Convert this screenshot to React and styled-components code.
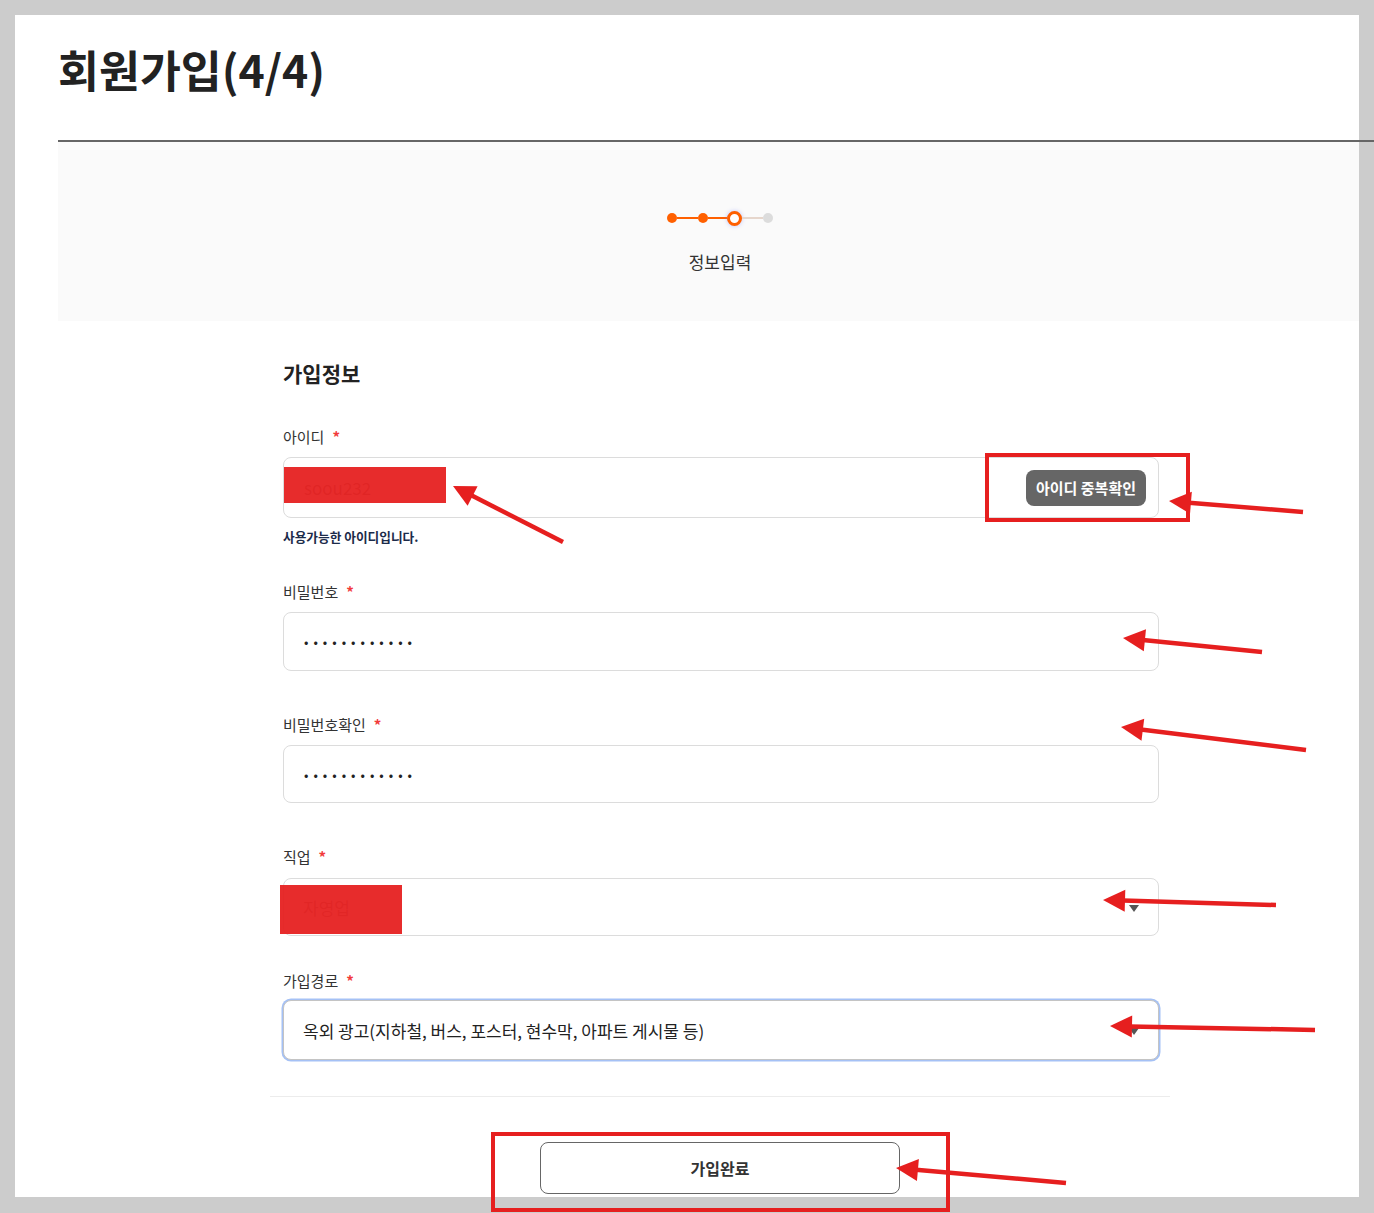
import React from 'react';
import styled, { createGlobalStyle, css } from 'styled-components';

const GlobalStyle = createGlobalStyle`
  html, body {
    margin: 0;
    padding: 0;
    background: #cccccc;
    font-family: "Noto Sans CJK KR", "Noto Sans", sans-serif;
    color: #222;
  }
  * { box-sizing: border-box; }
`;

const Page = styled.div`
  position: relative;
  width: 1374px;
  height: 1213px;
  padding: 15px 15px 16px;
  overflow: hidden;
`;

const Panel = styled.div`
  background: #fff;
  height: 1182px;
  padding-left: 43px;
`;

const Title = styled.h1`
  margin: 0;
  padding-top: 27px;
  padding-bottom: 44px;
  font-size: 44.5px;
  line-height: 54px;
  font-weight: 700;
  color: #222;
`;

const HeaderLine = styled.div`
  height: 2px;
  background: #666;
  margin-right: -15px;
`;

const StepArea = styled.section`
  background: #fafafa;
  height: 179px;
  padding: 69px 0 0 212px;
`;

const StepInner = styled.div`
  width: 900px;
  display: flex;
  flex-direction: column;
  align-items: center;
  gap: 25px;
`;

const Steps = styled.div`
  display: flex;
  align-items: center;
  height: 14px;
`;

const Dot = styled.span`
  width: 10px;
  height: 10px;
  border-radius: 50%;
  background: ${({ $done }) => ($done ? '#ff6000' : '#dcdcdc')};
`;

const Ring = styled.span`
  width: 15px;
  height: 15px;
  border-radius: 50%;
  background: #fff;
  border: 3px solid #ff6000;
  box-shadow: 0 0 4px rgba(120, 130, 255, 0.45);
`;

const Bar = styled.span`
  width: ${({ $w }) => $w}px;
  height: 2px;
  background: ${({ $done }) => ($done ? '#ff6000' : '#e6d6cc')};
`;

const StepLabel = styled.div`
  font-size: 17px;
  line-height: 24px;
  color: #333;
`;

const FormColumn = styled.div`
  width: 900px;
  margin-left: 212px;
`;

const Fields = styled.div`
  padding: 0 11px 0 13px;
`;

const SectionTitle = styled.h2`
  margin: 40px 0 0;
  font-size: 21px;
  line-height: 24px;
  font-weight: 700;
  color: #222;
`;

const FieldWrap = styled.div`
  margin-top: ${({ $top }) => $top}px;
`;

const Label = styled.label`
  display: block;
  font-size: 15px;
  line-height: 20px;
  color: #333;
  margin-bottom: ${({ $gap }) => ($gap ? $gap : 10)}px;
`;

const Star = styled.span`
  color: #f23b3b;
  font-weight: 700;
  margin-left: 8px;
`;

const boxBase = css`
  width: 100%;
  border: 1px solid #dcdcdc;
  border-radius: 8px;
  background: #fff;
`;

const TextInput = styled.input`
  ${boxBase};
  display: block;
  height: ${({ $h }) => $h}px;
  padding: 0 20px;
  font-family: inherit;
  font-size: 13px;
  letter-spacing: 5px;
  color: #222;
  outline: none;
`;

const IdBox = styled.div`
  ${boxBase};
  height: 61px;
  display: flex;
  align-items: center;
  padding-right: 12px;
`;

const IdInput = styled.input`
  flex: 1;
  height: 100%;
  border: none;
  background: transparent;
  padding: 0 20px;
  font-family: inherit;
  font-size: 17px;
  color: #888;
  outline: none;
`;

const CheckButton = styled.button`
  height: 36px;
  padding: 0 10px;
  border: none;
  border-radius: 8px;
  background: #666;
  color: #fff;
  font-family: inherit;
  font-size: 15px;
  font-weight: 700;
  cursor: pointer;
`;

const Notice = styled.p`
  margin: 10px 0 0;
  font-size: 12.7px;
  line-height: 18px;
  font-weight: 700;
  color: #1c2b4a;
`;

const SelectWrap = styled.div`
  position: relative;
  &::after {
    content: '';
    position: absolute;
    right: 20px;
    top: 50%;
    margin-top: -2px;
    border-left: 5px solid transparent;
    border-right: 5px solid transparent;
    border-top: 7px solid #555;
  }
`;

const Select = styled.select`
  ${boxBase};
  display: block;
  appearance: none;
  height: ${({ $h }) => $h}px;
  padding: 0 40px 0 19px;
  font-family: inherit;
  font-size: 17px;
  color: ${({ $muted }) => ($muted ? '#999' : '#222')};
  outline: none;
  ${({ $focused }) =>
    $focused &&
    css`
      border-color: #c4c4c4;
      box-shadow: 0 0 0 1.5px #a5c1f5;
    `}
`;

const Divider = styled.hr`
  margin: 36px 0 0;
  border: none;
  height: 1px;
  background: #ececec;
`;

const Actions = styled.div`
  display: flex;
  justify-content: center;
  padding-top: 45px;
`;

const SubmitButton = styled.button`
  width: 360px;
  height: 52px;
  border: 1px solid #666;
  border-radius: 8px;
  background: #fff;
  color: #333;
  font-family: inherit;
  font-size: 16px;
  font-weight: 700;
  cursor: pointer;
`;

const Annotations = styled.svg`
  position: absolute;
  left: 0;
  top: 0;
  pointer-events: none;
`;

const RED = '#e61f1f';

function Arrow({ from, to }) {
  const [x1, y1] = from;
  const [x2, y2] = to;
  const dx = x2 - x1;
  const dy = y2 - y1;
  const len = Math.hypot(dx, dy);
  const ux = dx / len;
  const uy = dy / len;
  const L = 22;
  const W = 11;
  const bx = x2 - ux * L;
  const by = y2 - uy * L;
  const px = -uy * W;
  const py = ux * W;
  return (
    <g>
      <line x1={x1} y1={y1} x2={bx + ux * 2} y2={by + uy * 2} stroke={RED} strokeWidth="4.5" />
      <polygon points={`${x2},${y2} ${bx + px},${by + py} ${bx - px},${by - py}`} fill={RED} />
    </g>
  );
}

function Field({ label, top, gap, children }) {
  return (
    <FieldWrap $top={top}>
      <Label $gap={gap}>
        {label}
        <Star>*</Star>
      </Label>
      {children}
    </FieldWrap>
  );
}

export default function App() {
  return (
    <>
      <GlobalStyle />
      <Page>
        <Panel>
          <Title>회원가입(4/4)</Title>
          <HeaderLine />
          <StepArea>
            <StepInner>
              <Steps>
                <Dot $done />
                <Bar $done $w={21} />
                <Dot $done />
                <Bar $done $w={19} />
                <Ring />
                <Bar $w={21} />
                <Dot />
              </Steps>
              <StepLabel>정보입력</StepLabel>
            </StepInner>
          </StepArea>

          <FormColumn>
            <Fields>
              <SectionTitle>가입정보</SectionTitle>

              <Field label="아이디" top={42}>
                <IdBox>
                  <IdInput defaultValue="soou232" readOnly />
                  <CheckButton type="button">아이디 중복확인</CheckButton>
                </IdBox>
              </Field>
              <Notice>사용가능한 아이디입니다.</Notice>

              <Field label="비밀번호" top={36}>
                <TextInput type="password" defaultValue="password1234" readOnly $h={59} />
              </Field>

              <Field label="비밀번호확인" top={44}>
                <TextInput type="password" defaultValue="password1234" readOnly $h={58} />
              </Field>

              <Field label="직업" top={44} gap={11}>
                <SelectWrap>
                  <Select $h={58} $muted defaultValue="self">
                    <option value="self">자영업</option>
                    <option value="office">회사원</option>
                  </Select>
                </SelectWrap>
              </Field>

              <Field label="가입경로" top={35} gap={9}>
                <SelectWrap>
                  <Select $h={60} $focused defaultValue="outdoor">
                    <option value="outdoor">옥외 광고(지하철, 버스, 포스터, 현수막, 아파트 게시물 등)</option>
                    <option value="web">인터넷 검색</option>
                  </Select>
                </SelectWrap>
              </Field>
            </Fields>

            <Divider />
            <Actions>
              <SubmitButton type="button">가입완료</SubmitButton>
            </Actions>
          </FormColumn>
        </Panel>

        <Annotations width="1374" height="1213" viewBox="0 0 1374 1213">
          <rect x="284" y="467" width="162" height="36" fill={RED} opacity="0.94" />
          <rect x="280" y="885" width="122" height="49" fill={RED} opacity="0.94" />
          <rect x="987" y="455" width="201" height="65" fill="none" stroke={RED} strokeWidth="4" />
          <rect x="493" y="1134" width="455" height="76" fill="none" stroke={RED} strokeWidth="4" />
          <Arrow from={[563, 542]} to={[453, 486]} />
          <Arrow from={[1303, 512]} to={[1169, 501]} />
          <Arrow from={[1262, 652]} to={[1123, 638]} />
          <Arrow from={[1306, 750]} to={[1121, 727]} />
          <Arrow from={[1276, 905]} to={[1103, 900]} />
          <Arrow from={[1315, 1030]} to={[1110, 1026]} />
          <Arrow from={[1066, 1183]} to={[896, 1168]} />
        </Annotations>
      </Page>
    </>
  );
}
